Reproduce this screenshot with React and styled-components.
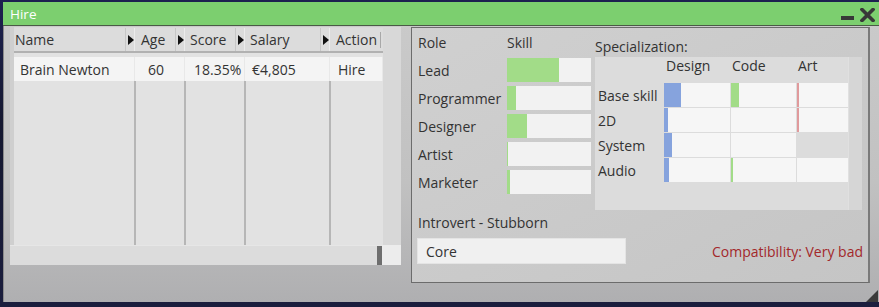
import React from 'react';
import styled, { createGlobalStyle } from 'styled-components';

const GlobalStyle = createGlobalStyle`
  html, body {
    margin: 0;
    padding: 0;
    background: #181b3a;
    overflow: hidden;
  }
  body {
    font-family: "Open Sans", "Liberation Sans", sans-serif;
    font-size: 14px;
    color: #333;
  }
`;

const Page = styled.div`
  width: 879px;
  height: 307px;
  padding: 2px 0 0 3px;
  box-sizing: border-box;
  background: linear-gradient(to bottom, #1d2150, #14172f 40%, #1b1e3e);
`;

const Window = styled.div`
  position: relative;
  width: 876px;
  height: 300px;
  display: flex;
  flex-direction: column;
  background: linear-gradient(to bottom, #cbcbcb, #c1c1c1 60%, #afafb1);
  overflow: hidden;
`;

const TitleBar = styled.div`
  height: 23px;
  display: flex;
  align-items: center;
  justify-content: space-between;
  padding: 0 4px 0 7px;
  background: #7ccf6f;
  border-bottom: 1px solid #4a5a46;
  color: #fff;
  font-size: 13.5px;
`;

const TitleIcons = styled.div`
  display: flex;
  align-items: center;
  gap: 6px;
  padding-top: 2px;
`;

const MinBar = styled.div`
  width: 13px;
  height: 4px;
  margin-top: 7px;
  background: #383838;
`;

const Body = styled.div`
  flex: 1;
  display: flex;
  align-items: flex-start;
  gap: 10px;
  padding: 1px 0 0 6px;
  border-left: 1px solid #8a8a8a;
`;

/* ---- left: table ---- */

const TableFrame = styled.div`
  width: 391px;
  height: 238px;
  display: flex;
  flex-direction: column;
  background: #d9d9d9;
`;

const TableMain = styled.div`
  flex: 1;
  display: flex;
  padding: 1px 0 0 4px;
  background: linear-gradient(to right, #cfcfcf 4px, #d9d9d9 4px);
`;

const Grid = styled.div`
  width: 369px;
  display: flex;
  background: #e2e2e2;
`;

const Column = styled.div`
  width: ${p => p.$w}px;
  display: flex;
  flex-direction: column;
`;

const HeadCell = styled.div`
  height: 23px;
  display: flex;
  align-items: center;
  background: #dcdcdc;
  border-bottom: 2px solid #b1b1b1;
`;

const HeadLabel = styled.div`
  flex: 1;
  padding-left: ${p => p.$pad}px;
  white-space: nowrap;
  overflow: hidden;
`;

const SortBtn = styled.div`
  width: 10px;
  height: 23px;
  display: flex;
  align-items: center;
  justify-content: center;
  border-left: 1px solid #c6c6c6;
  border-right: 1px solid #ececec;
  box-sizing: border-box;
  &::after {
    content: '';
    margin-left: 1px;
    border-left: 6px solid #111;
    border-top: 5px solid transparent;
    border-bottom: 5px solid transparent;
  }
`;

const HeadTick = styled.div`
  width: 1px;
  height: 16px;
  margin-right: 2px;
  background: #a8a8a8;
`;

const RowCell = styled.div`
  height: 24px;
  margin-top: 4px;
  display: flex;
  align-items: center;
  padding-left: ${p => p.$pad}px;
  background: #f4f4f4;
  border-right: 1px solid #e8e8e8;
  white-space: nowrap;
`;

const Filler = styled.div`
  flex: 1;
  border-right: ${p => (p.$line ? '2px solid #b6b6b6' : 'none')};
  margin-right: ${p => (p.$line ? '-1px' : '0')};
`;

const VScroll = styled.div`
  flex: 1;
  background: #d8d8d8;
`;

const HScroll = styled.div`
  height: 20px;
  display: flex;
`;

const HTrack = styled.div`
  flex: 1;
  display: flex;
  justify-content: flex-end;
  background: #dcdcdc;
  border-top: 1px solid #e6e6e6;
`;

const HThumb = styled.div`
  width: 5px;
  background: #6e6e6e;
`;

const Corner = styled.div`
  width: 19px;
  background: #ececec;
`;

/* ---- right: details ---- */

const Panel = styled.div`
  width: 459px;
  height: 256px;
  box-sizing: border-box;
  display: flex;
  flex-direction: column;
  padding: 2px 5px 0 6px;
  border: 1px solid #6c6c6c;
  border-right: 2px solid #7a7a7a;
  background: linear-gradient(to bottom right, #d0d0d0, #c5c5c5);
`;

const TopRow = styled.div`
  display: flex;
  gap: 4px;
`;

const SkillGrid = styled.div`
  display: grid;
  grid-template-columns: 89px 84px;
  grid-auto-rows: 24px;
  row-gap: 4px;
  align-items: center;
`;

const SkillBar = styled.div`
  height: 24px;
  background: #f2f2f2;
  display: flex;
`;

const Fill = styled.div`
  height: 100%;
  flex-shrink: 0;
  background: ${p => p.$color};
`;

const SpecWrap = styled.div`
  display: flex;
  flex-direction: column;
`;

const SpecTitle = styled.div`
  height: 27px;
  padding-top: 5px;
  box-sizing: border-box;
  display: flex;
  align-items: center;
`;

const SpecBox = styled.div`
  width: 267px;
  height: 153px;
  display: flex;
  background: #dcdcdc;
`;

const SpecInner = styled.div`
  width: 253px;
  display: grid;
  grid-template-columns: 68px 66px 65px 52px;
  grid-template-rows: 25px repeat(4, 24px);
  column-gap: 1px;
  row-gap: 1px;
  align-items: center;
  align-content: start;
`;

const SpecHead = styled.div`
  padding-left: ${p => p.$pad}px;
  align-self: center;
  margin-top: -9px;
`;

const RowLabel = styled.div`
  padding-left: 3px;
  white-space: nowrap;
`;

const SpecCell = styled.div`
  height: 24px;
  display: flex;
  background: ${p => (p.$empty ? 'transparent' : '#f6f6f6')};
`;

const SpecScroll = styled.div`
  flex: 1;
  background: #d6d6d6;
  border-left: 1px solid #e0e0e0;
`;

const Trait = styled.div`
  height: 24px;
  display: flex;
  align-items: center;
`;

const BottomRow = styled.div`
  margin-top: 4px;
  display: flex;
  align-items: center;
  justify-content: space-between;
`;

const Input = styled.div`
  width: 199px;
  height: 24px;
  display: flex;
  align-items: center;
  padding-left: 8px;
  background: #f0f0f0;
  border: 1px solid #e4e4e4;
  margin-left: -1px;
`;

const Compat = styled.div`
  color: #a3282b;
`;

const Grip = styled.div`
  position: absolute;
  right: 1px;
  bottom: 0;
  width: 0;
  height: 0;
  border-left: 12px solid transparent;
  border-bottom: 12px solid #3a3a3a;
`;

const columns = [
  { key: 'name', title: 'Name', w: 121, hp: 1, rp: 6, value: 'Brain Newton' },
  { key: 'age', title: 'Age', w: 50, hp: 6, rp: 13, value: '60' },
  { key: 'score', title: 'Score', w: 60, hp: 5, rp: 9, value: '18.35%' },
  { key: 'salary', title: 'Salary', w: 85, hp: 5, rp: 7, value: '€4,805' },
  { key: 'action', title: 'Action', w: 53, hp: 6, rp: 8, value: 'Hire', last: true },
];

const skills = [
  { role: 'Lead', pct: 62 },
  { role: 'Programmer', pct: 11 },
  { role: 'Designer', pct: 24 },
  { role: 'Artist', pct: 1 },
  { role: 'Marketer', pct: 3 },
];

const BLUE = '#86a3dd';
const GREEN = '#a2dc88';
const RED = '#e09a9c';

const spec = [
  { label: 'Base skill', cells: [[17, BLUE], [8, GREEN], [2, RED]] },
  { label: '2D', cells: [[4, BLUE], [0, GREEN], [2, RED]] },
  { label: 'System', cells: [[8, BLUE], [0, GREEN], null] },
  { label: 'Audio', cells: [[5, BLUE], [2, GREEN], [0, RED]] },
];

function CloseIcon() {
  return (
    <svg width="15" height="14" viewBox="0 0 15 14">
      <path d="M2 1.5 L13 12.5 M13 1.5 L2 12.5" stroke="#383838" strokeWidth="3.6" strokeLinecap="square" />
    </svg>
  );
}

export default function App() {
  return (
    <Page>
      <GlobalStyle />
      <Window>
        <TitleBar>
          <span>Hire</span>
          <TitleIcons>
            <MinBar />
            <CloseIcon />
          </TitleIcons>
        </TitleBar>

        <Body>
          <TableFrame>
            <TableMain>
              <Grid>
                {columns.map(col => (
                  <Column key={col.key} $w={col.w}>
                    <HeadCell>
                      <HeadLabel $pad={col.hp}>{col.title}</HeadLabel>
                      {col.last ? <HeadTick /> : <SortBtn />}
                    </HeadCell>
                    <RowCell $pad={col.rp}>{col.value}</RowCell>
                    <Filler $line={!col.last} />
                  </Column>
                ))}
              </Grid>
              <VScroll />
            </TableMain>
            <HScroll>
              <HTrack><HThumb /></HTrack>
              <Corner />
            </HScroll>
          </TableFrame>

          <Panel>
            <TopRow>
              <SkillGrid>
                <div>Role</div>
                <div>Skill</div>
                {skills.map(s => (
                  <React.Fragment key={s.role}>
                    <div>{s.role}</div>
                    <SkillBar>
                      <Fill $color={GREEN} style={{ width: `${s.pct}%` }} />
                    </SkillBar>
                  </React.Fragment>
                ))}
              </SkillGrid>

              <SpecWrap>
                <SpecTitle>Specialization:</SpecTitle>
                <SpecBox>
                  <SpecInner>
                    <div />
                    <SpecHead $pad={2}>Design</SpecHead>
                    <SpecHead $pad={1}>Code</SpecHead>
                    <SpecHead $pad={1}>Art</SpecHead>
                    {spec.map(row => (
                      <React.Fragment key={row.label}>
                        <RowLabel>{row.label}</RowLabel>
                        {row.cells.map((c, i) =>
                          c ? (
                            <SpecCell key={i}>
                              <Fill $color={c[1]} style={{ width: `${c[0]}px` }} />
                            </SpecCell>
                          ) : (
                            <SpecCell key={i} $empty />
                          )
                        )}
                      </React.Fragment>
                    ))}
                  </SpecInner>
                  <SpecScroll />
                </SpecBox>
              </SpecWrap>
            </TopRow>

            <Trait>Introvert - Stubborn</Trait>
            <BottomRow>
              <Input>Core</Input>
              <Compat>Compatibility: Very bad</Compat>
            </BottomRow>
          </Panel>
        </Body>
        <Grip />
      </Window>
    </Page>
  );
}
